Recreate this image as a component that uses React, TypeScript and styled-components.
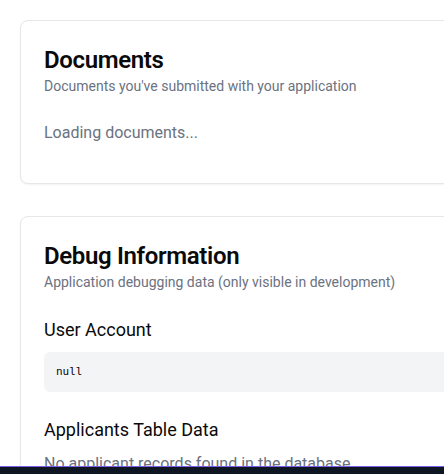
import styled, { createGlobalStyle } from 'styled-components'

const GlobalStyle = createGlobalStyle`
  html, body {
    margin: 0;
    background: #ffffff;
    font-family: Roboto, "Open Sans", sans-serif;
    color: #0a0a0a;
  }
  #root {
    overflow: hidden;
    height: 100vh;
    display: flex;
    flex-direction: column;
  }
`

export default function App() {
  return (
    <>
      <GlobalStyle />
      <Page>
        <Card>
          <CardTitle>Documents</CardTitle>
          <CardDescription>Documents you've submitted with your application</CardDescription>
          <LoadingText>Loading documents...</LoadingText>
        </Card>
        <Card>
          <CardTitle>Debug Information</CardTitle>
          <CardDescription>Application debugging data (only visible in development)</CardDescription>
          <Section>
            <SectionTitle>User Account</SectionTitle>
            <CodeBlock>null</CodeBlock>
          </Section>
          <Section>
            <SectionTitle>Applicants Table Data</SectionTitle>
            <EmptyText>No applicant records found in the database</EmptyText>
          </Section>
        </Card>
      </Page>
      <BottomBar />
    </>
  )
}

const Page = styled.main`
  flex: 1;
  min-height: 0;
  overflow: hidden;
  display: flex;
  flex-direction: column;
  gap: 32px;
  padding: 20px 0 0 20px;
`

const Card = styled.section`
  flex-shrink: 0;
  width: 640px;
  box-sizing: border-box;
  padding: 23px 23px 38px;
  border: 1px solid #e5e7eb;
  border-radius: 8px;
  background: #ffffff;
  box-shadow: 0 1px 2px rgba(0, 0, 0, 0.05);
`

const CardTitle = styled.h2`
  margin: 0;
  font-size: 24px;
  line-height: 32px;
  font-weight: 600;
  letter-spacing: -0.35px;
`

const CardDescription = styled.p`
  margin: 0;
  font-size: 14px;
  line-height: 20px;
  color: #6b7280;
`

const LoadingText = styled.p`
  margin: 25px 0 0;
  font-size: 16px;
  line-height: 24px;
  color: #6b7280;
`

const Section = styled.div`
  margin-top: 24px;
`

const SectionTitle = styled.h3`
  margin: 0 0 8px;
  font-size: 18px;
  line-height: 28px;
  font-weight: 400;
`

const CodeBlock = styled.pre`
  margin: 0;
  padding: 12px;
  border-radius: 6px;
  background: #f3f4f6;
  font-family: "DejaVu Sans Mono", monospace;
  font-size: 11px;
  line-height: 16px;
`

const EmptyText = styled.p`
  margin: 0;
  font-size: 16px;
  line-height: 24px;
  color: #6b7280;
`

const BottomBar = styled.footer`
  flex-shrink: 0;
  height: 7px;
  border-top: 1px solid #7b5ce6;
  background: #0f1623;
`
